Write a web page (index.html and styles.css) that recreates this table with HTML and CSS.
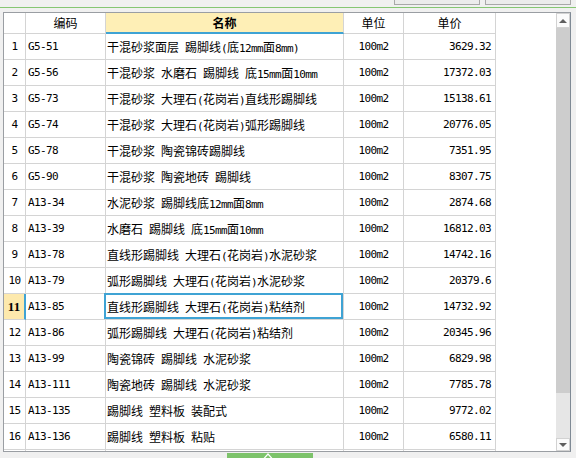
FILE: index.html
```html
<!DOCTYPE html>
<html lang="zh">
<head>
<meta charset="utf-8">
<title>定额列表</title>
<link rel="stylesheet" href="styles.css">
</head>
<body>
<div class="topbar">
  <div class="tbtn"></div>
  <div class="tbtn"></div>
</div>
<div class="greenline"></div>
<div class="spacer"></div>
<div class="frame">
  <div class="grid">
    <div class="hc num"></div>
    <div class="hc">编码</div>
    <div class="hc name">名称</div>
    <div class="hc">单位</div>
    <div class="hc">单价</div>

    <div class="c num">1</div><div class="c code">G5-51</div><div class="c nm">干混砂浆面层<span class="a"> </span>踢脚线<span class="a">(</span>底<span class="a">12mm</span>面<span class="a">8mm)</span></div><div class="c unit">100m2</div><div class="c price">3629.32</div>
    <div class="c num">2</div><div class="c code">G5-56</div><div class="c nm">干混砂浆<span class="a"> </span>水磨石<span class="a"> </span>踢脚线<span class="a"> </span>底<span class="a">15mm</span>面<span class="a">10mm</span></div><div class="c unit">100m2</div><div class="c price">17372.03</div>
    <div class="c num">3</div><div class="c code">G5-73</div><div class="c nm">干混砂浆<span class="a"> </span>大理石<span class="a">(</span>花岗岩<span class="a">)</span>直线形踢脚线</div><div class="c unit">100m2</div><div class="c price">15138.61</div>
    <div class="c num">4</div><div class="c code">G5-74</div><div class="c nm">干混砂浆<span class="a"> </span>大理石<span class="a">(</span>花岗岩<span class="a">)</span>弧形踢脚线</div><div class="c unit">100m2</div><div class="c price">20776.05</div>
    <div class="c num">5</div><div class="c code">G5-78</div><div class="c nm">干混砂浆<span class="a"> </span>陶瓷锦砖踢脚线</div><div class="c unit">100m2</div><div class="c price">7351.95</div>
    <div class="c num">6</div><div class="c code">G5-90</div><div class="c nm">干混砂浆<span class="a"> </span>陶瓷地砖<span class="a"> </span>踢脚线</div><div class="c unit">100m2</div><div class="c price">8307.75</div>
    <div class="c num">7</div><div class="c code">A13-34</div><div class="c nm">水泥砂浆<span class="a"> </span>踢脚线底<span class="a">12mm</span>面<span class="a">8mm</span></div><div class="c unit">100m2</div><div class="c price">2874.68</div>
    <div class="c num">8</div><div class="c code">A13-39</div><div class="c nm">水磨石<span class="a"> </span>踢脚线<span class="a"> </span>底<span class="a">15mm</span>面<span class="a">10mm</span></div><div class="c unit">100m2</div><div class="c price">16812.03</div>
    <div class="c num">9</div><div class="c code">A13-78</div><div class="c nm">直线形踢脚线<span class="a"> </span>大理石<span class="a">(</span>花岗岩<span class="a">)</span>水泥砂浆</div><div class="c unit">100m2</div><div class="c price">14742.16</div>
    <div class="c num">10</div><div class="c code">A13-79</div><div class="c nm">弧形踢脚线<span class="a"> </span>大理石<span class="a">(</span>花岗岩<span class="a">)</span>水泥砂浆</div><div class="c unit">100m2</div><div class="c price">20379.6</div>
    <div class="c num sel">11</div><div class="c code">A13-85</div><div class="c nm cur">直线形踢脚线<span class="a"> </span>大理石<span class="a">(</span>花岗岩<span class="a">)</span>粘结剂</div><div class="c unit">100m2</div><div class="c price">14732.92</div>
    <div class="c num">12</div><div class="c code">A13-86</div><div class="c nm">弧形踢脚线<span class="a"> </span>大理石<span class="a">(</span>花岗岩<span class="a">)</span>粘结剂</div><div class="c unit">100m2</div><div class="c price">20345.96</div>
    <div class="c num">13</div><div class="c code">A13-99</div><div class="c nm">陶瓷锦砖<span class="a"> </span>踢脚线<span class="a"> </span>水泥砂浆</div><div class="c unit">100m2</div><div class="c price">6829.98</div>
    <div class="c num">14</div><div class="c code">A13-111</div><div class="c nm">陶瓷地砖<span class="a"> </span>踢脚线<span class="a"> </span>水泥砂浆</div><div class="c unit">100m2</div><div class="c price">7785.78</div>
    <div class="c num">15</div><div class="c code">A13-135</div><div class="c nm">踢脚线<span class="a"> </span>塑料板<span class="a"> </span>装配式</div><div class="c unit">100m2</div><div class="c price">9772.02</div>
    <div class="c num">16</div><div class="c code">A13-136</div><div class="c nm">踢脚线<span class="a"> </span>塑料板<span class="a"> </span>粘贴</div><div class="c unit">100m2</div><div class="c price">6580.11</div>
    <div class="c num"></div><div class="c code"></div><div class="c nm"></div><div class="c unit"></div><div class="c price"></div>
  </div>
  <div class="blank"></div>
  <div class="vscroll">
    <div class="sbtn"><span class="tri-up"></span></div>
    <div class="thumb"></div>
    <div class="track"></div>
    <div class="sbtn down"><span class="tri-down"></span></div>
  </div>
</div>
<div class="bottombar">
  <div class="gbtn">
    <svg width="10" height="6" viewBox="0 0 10 6"><polyline points="1,5.5 5,1 9,5.5" fill="none" stroke="#ffffff" stroke-width="1.2"/></svg>
  </div>
</div>
</body>
</html>
```

FILE: styles.css
```css
html, body {
  margin: 0;
  padding: 0;
}
body {
  width: 576px;
  height: 458px;
  overflow: hidden;
  background: #f0f0f0;
  font-family: "Noto Sans CJK SC", sans-serif;
  color: #000;
}
.topbar {
  height: 7px;
  display: flex;
  justify-content: flex-end;
  gap: 5px;
  padding-right: 5px;
}
.tbtn {
  width: 86px;
  height: 5px;
  box-sizing: border-box;
  border: 1px solid #a8a8a8;
  border-top: none;
  background: #ececec;
}
.greenline {
  height: 1px;
  background: #86c673;
}
.spacer {
  height: 4px;
}
.frame {
  margin-left: 3px;
  width: 568px;
  height: 440px;
  box-sizing: border-box;
  border: 1px solid #9a9ea3;
  border-right-color: #7f8a95;
  background: #fff;
  display: flex;
  overflow: hidden;
}
.grid {
  display: grid;
  grid-template-columns: 22px 80px 238px 60px 92px;
  grid-auto-rows: 26px;
  grid-template-rows: 21px;
  align-content: start;
  flex: none;
}
.hc, .c {
  box-sizing: border-box;
  border-right: 1px solid #d4d4d4;
  border-bottom: 1px solid #d4d4d4;
  white-space: nowrap;
  overflow: hidden;
}
.hc {
  text-align: center;
  font-size: 12px;
  line-height: 20px;
  background: #fff;
}
.hc.name {
  background: #feefb6;
  border-bottom: 2px solid #3fa3d4;
  line-height: 19px;
  font-weight: 700;
}
.c {
  font-family: "DejaVu Sans Mono", monospace;
  font-size: 11px;
  letter-spacing: -0.62px;
  line-height: 25px;
}
.num {
  text-align: center;
}
.num.sel {
  background: #fde9ad;
  border-right: 2px solid #3fa3d4;
  font-family: "Liberation Serif", serif;
  font-weight: 700;
  font-size: 13px;
  letter-spacing: 0;
}
.code {
  padding-left: 2px;
}
.nm {
  padding-left: 1px;
  font-family: "Noto Sans CJK SC", sans-serif;
  font-size: 12px;
  letter-spacing: 0;
}
.nm .a {
  font-family: "DejaVu Sans Mono", monospace;
  font-size: 11px;
  letter-spacing: -0.62px;
  white-space: pre;
}
.nm.cur {
  position: relative;
  overflow: visible;
}
.nm.cur::after {
  content: "";
  position: absolute;
  top: -1px;
  left: -2px;
  right: 0;
  bottom: 0;
  border: 2px solid #3fa3d4;
}
.unit {
  text-align: center;
}
.price {
  text-align: right;
  padding-right: 4px;
}
.blank {
  flex: 1;
  background: #fff;
}
.vscroll {
  width: 14px;
  flex: none;
  display: flex;
  flex-direction: column;
  background: #e6e6e6;
}
.sbtn {
  height: 15px;
  box-sizing: border-box;
  border: 1px solid #d2d2d2;
  background: #fbfbfb;
  display: flex;
  align-items: center;
  justify-content: center;
}
.sbtn.down {
  height: 13px;
}
.tri-up {
  width: 0;
  height: 0;
  border-left: 4px solid transparent;
  border-right: 4px solid transparent;
  border-bottom: 4px solid #5f5f5f;
}
.tri-down {
  width: 0;
  height: 0;
  border-left: 4px solid transparent;
  border-right: 4px solid transparent;
  border-top: 4px solid #5f5f5f;
}
.thumb {
  height: 365px;
  background: #cdcdcd;
}
.track {
  flex: 1;
  background: #e6e6e6;
}
.bottombar {
  height: 6px;
  padding-top: 1px;
  padding-left: 227px;
}
.gbtn {
  width: 86px;
  height: 6px;
  background: #7dc36b;
  display: flex;
  justify-content: center;
  align-items: flex-start;
  padding-right: 4px;
  box-sizing: border-box;
}
.gbtn svg {
  display: block;
}
```
